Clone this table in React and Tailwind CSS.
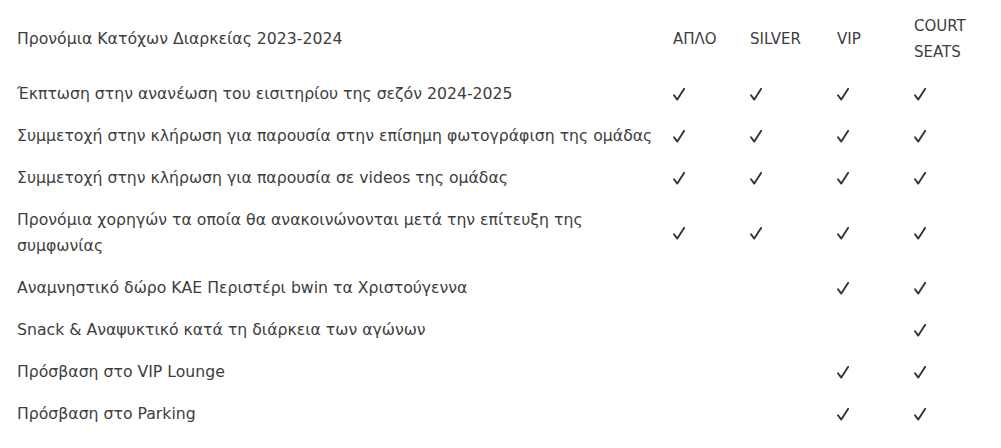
import React from "react";

const rows = [
  ["Έκπτωση στην ανανέωση του εισιτηρίου της σεζόν 2024-2025", [1, 1, 1, 1]],
  ["Συμμετοχή στην κλήρωση για παρουσία στην επίσημη φωτογράφιση της ομάδας", [1, 1, 1, 1]],
  ["Συμμετοχή στην κλήρωση για παρουσία σε videos της ομάδας", [1, 1, 1, 1]],
  ["Προνόμια χορηγών τα οποία θα ανακοινώνονται μετά την επίτευξη της συμφωνίας", [1, 1, 1, 1]],
  ["Αναμνηστικό δώρο ΚΑΕ Περιστέρι bwin τα Χριστούγεννα", [0, 0, 1, 1]],
  ["Snack & Αναψυκτικό κατά τη διάρκεια των αγώνων", [0, 0, 0, 1]],
  ["Πρόσβαση στο VIP Lounge", [0, 0, 1, 1]],
  ["Πρόσβαση στο Parking", [0, 0, 1, 1]],
];

const cols = "grid grid-cols-[673px_77px_87px_77px_1fr]";

function Check() {
  return (
    <svg width="12" height="13" viewBox="0 0 12 13" className="block">
      <path d="M1 7.2 L4.3 11.6 L11.2 0.8" fill="none" stroke="#333" strokeWidth="1.9" strokeLinecap="round" strokeLinejoin="round" />
    </svg>
  );
}

export default function App() {
  return (
    <div className="w-[1001px] h-[448px] bg-white text-[#3d3d3d] font-['DejaVu_Sans',sans-serif] overflow-hidden">
      <div className={`${cols} pt-[13px] pb-[8px] items-center`}>
        <div className="pl-[17px] text-[15.7px] leading-[26px]">Προνόμια Κατόχων Διαρκείας 2023-2024</div>
        <div className="text-[15px] leading-[26px]">ΑΠΛΟ</div>
        <div className="text-[15px] leading-[26px]">SILVER</div>
        <div className="text-[15px] leading-[26px]">VIP</div>
        <div className="text-[15px] leading-[26px]">COURT<br />SEATS</div>
      </div>
      {rows.map(([label, marks], i) => (
        <div key={i} className={`${cols} py-[8px] items-center`}>
          <div className="pl-[17px] pr-[14px] text-[15.7px] leading-[26px]">{label}</div>
          {marks.map((m, j) => (
            <div key={j} className="h-[26px] flex items-center">{m ? <Check /> : null}</div>
          ))}
        </div>
      ))}
    </div>
  );
}
